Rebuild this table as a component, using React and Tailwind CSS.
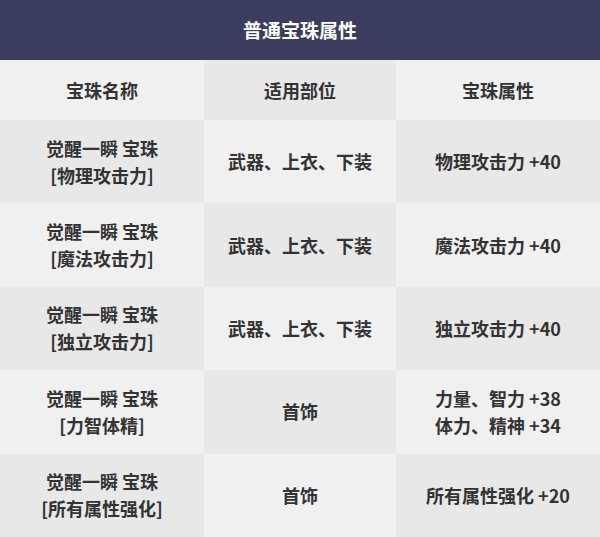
import React from 'react';

const rows = [
    { name: ['觉醒一瞬 宝珠', '[物理攻击力]'], part: '武器、上衣、下装', attr: ['物理攻击力 +40'] },
    { name: ['觉醒一瞬 宝珠', '[魔法攻击力]'], part: '武器、上衣、下装', attr: ['魔法攻击力 +40'] },
    { name: ['觉醒一瞬 宝珠', '[独立攻击力]'], part: '武器、上衣、下装', attr: ['独立攻击力 +40'] },
    { name: ['觉醒一瞬 宝珠', '[力智体精]'], part: '首饰', attr: ['力量、智力 +38', '体力、精神 +34'] },
    { name: ['觉醒一瞬 宝珠', '[所有属性强化]'], part: '首饰', attr: ['所有属性强化 +20'] },
];

const Cell = ({ dark, children }) => (
    <div className={`flex flex-col items-center justify-center text-center leading-[27px] ${dark ? 'bg-[#e8e8e8]' : 'bg-[#f0f0f0]'}`}>
        {children}
    </div>
);

const App = () => {
    return (
        <div className="w-[600px] h-[537px] flex flex-col text-[18px] font-bold text-[#333333]" style={{ fontFamily: '"Noto Sans CJK SC", "Noto Sans", sans-serif' }}>
            <div className="h-[60px] shrink-0 bg-[#3b3c5e] text-white text-[19px] flex items-center justify-center">
                普通宝珠属性
            </div>
            <div className="grid grid-cols-[204px_192px_204px] grid-rows-[60px_repeat(5,1fr)] flex-1">
                <Cell dark={false}>宝珠名称</Cell>
                <Cell dark>适用部位</Cell>
                <Cell dark={false}>宝珠属性</Cell>
                {rows.map((r, i) => {
                    const dark = i % 2 === 0;
                    return (
                        <React.Fragment key={i}>
                            <Cell dark={dark}>
                                {r.name.map(t => <span key={t}>{t}</span>)}
                            </Cell>
                            <Cell dark={!dark}>{r.part}</Cell>
                            <Cell dark={dark}>
                                {r.attr.map(t => <span key={t}>{t}</span>)}
                            </Cell>
                        </React.Fragment>
                    );
                })}
            </div>
        </div>
    );
};

export default App;
